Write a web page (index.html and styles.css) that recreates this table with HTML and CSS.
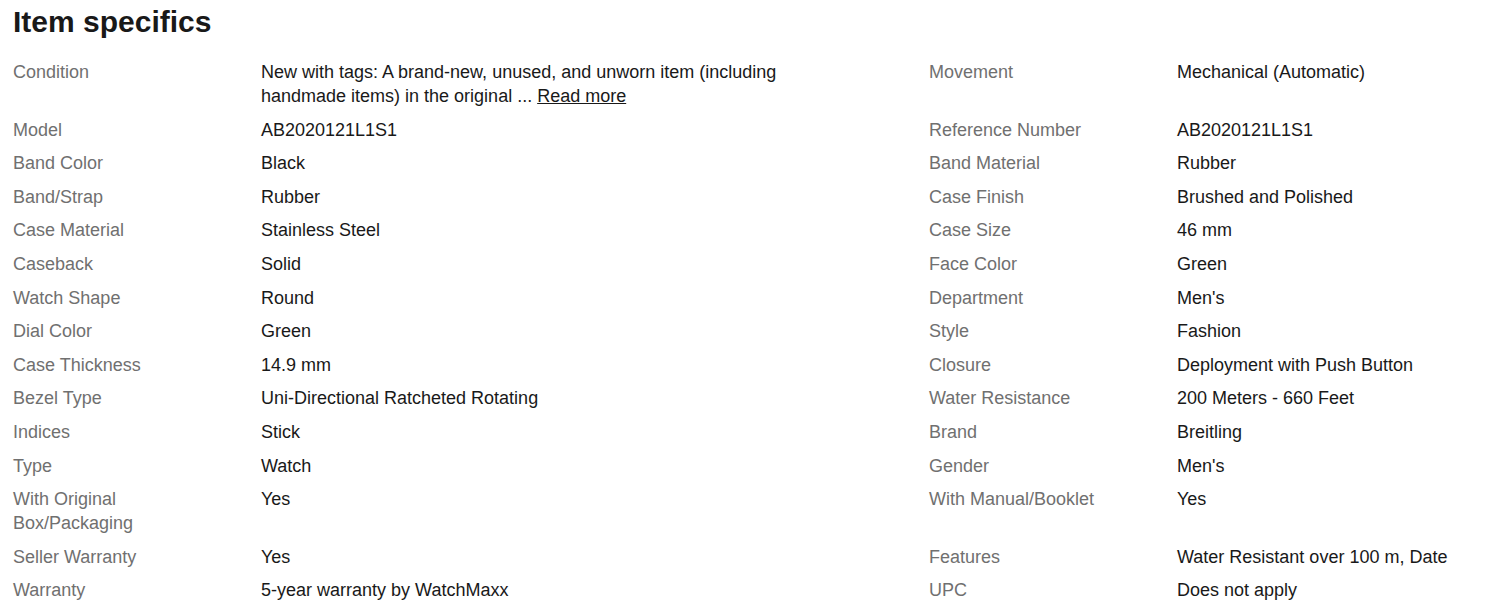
FILE: index.html
```html
<!DOCTYPE html>
<html>
<head>
<meta charset="utf-8">
<link rel="stylesheet" href="styles.css">
</head>
<body>
<section class="specs">
  <h2 class="title">Item specifics</h2>
  <div class="grid">
    <div class="label">Condition</div>
    <div class="value"><span class="cond">New with tags: A brand-new, unused, and unworn item (including handmade items) in the original ...&nbsp;<a class="more" href="#">Read more</a></span></div>
    <div class="label">Movement</div>
    <div class="value">Mechanical (Automatic)</div>

    <div class="label">Model</div><div class="value">AB2020121L1S1</div>
    <div class="label">Reference Number</div><div class="value">AB2020121L1S1</div>

    <div class="label">Band Color</div><div class="value">Black</div>
    <div class="label">Band Material</div><div class="value">Rubber</div>

    <div class="label">Band/Strap</div><div class="value">Rubber</div>
    <div class="label">Case Finish</div><div class="value">Brushed and Polished</div>

    <div class="label">Case Material</div><div class="value">Stainless Steel</div>
    <div class="label">Case Size</div><div class="value">46 mm</div>

    <div class="label">Caseback</div><div class="value">Solid</div>
    <div class="label">Face Color</div><div class="value">Green</div>

    <div class="label">Watch Shape</div><div class="value">Round</div>
    <div class="label">Department</div><div class="value">Men's</div>

    <div class="label">Dial Color</div><div class="value">Green</div>
    <div class="label">Style</div><div class="value">Fashion</div>

    <div class="label">Case Thickness</div><div class="value">14.9 mm</div>
    <div class="label">Closure</div><div class="value">Deployment with Push Button</div>

    <div class="label">Bezel Type</div><div class="value">Uni-Directional Ratcheted Rotating</div>
    <div class="label">Water Resistance</div><div class="value">200 Meters - 660 Feet</div>

    <div class="label">Indices</div><div class="value">Stick</div>
    <div class="label">Brand</div><div class="value">Breitling</div>

    <div class="label">Type</div><div class="value">Watch</div>
    <div class="label">Gender</div><div class="value">Men's</div>

    <div class="label narrow">With Original Box/Packaging</div><div class="value">Yes</div>
    <div class="label">With Manual/Booklet</div><div class="value">Yes</div>

    <div class="label">Seller Warranty</div><div class="value">Yes</div>
    <div class="label">Features</div><div class="value">Water Resistant over 100 m, Date</div>

    <div class="label">Warranty</div><div class="value">5-year warranty by WatchMaxx</div>
    <div class="label">UPC</div><div class="value">Does not apply</div>
  </div>
</section>
</body>
</html>
```

FILE: styles.css
```css
html, body {
  margin: 0;
  padding: 0;
  background: #ffffff;
}
body {
  font-family: "Liberation Sans", Arial, sans-serif;
  color: #191919;
}
.specs {
  padding: 4px 13px 0 13px;
}
.title {
  margin: 0;
  font-size: 30px;
  line-height: 36px;
  font-weight: 700;
  color: #191919;
}
.grid {
  margin-top: 20px;
  display: grid;
  grid-template-columns: 248px 668px 248px 1fr;
  row-gap: 9.6px;
  font-size: 18px;
  line-height: 24px;
}
.label {
  color: #707070;
  padding-right: 16px;
}
.label.narrow {
  max-width: 150px;
}
.value {
  color: #191919;
}
.cond {
  display: block;
  max-width: 540px;
}
.more {
  color: #191919;
  text-decoration: underline;
}
```
